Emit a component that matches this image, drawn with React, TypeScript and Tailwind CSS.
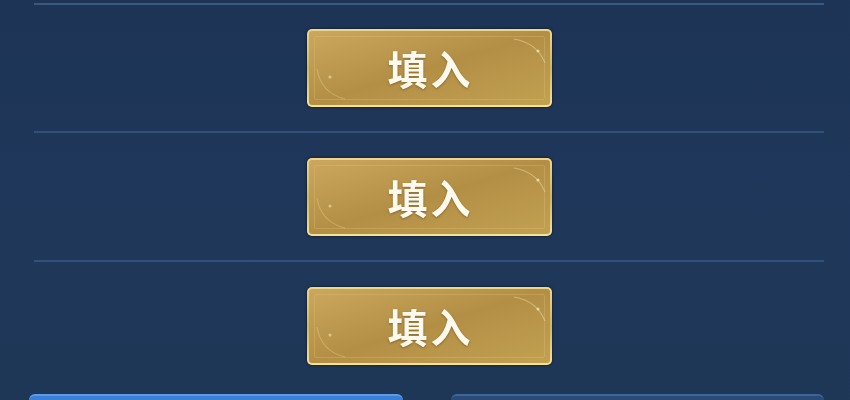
import React from "react";

function GoldButton() {
  return (
    <div className="relative w-[245px] h-[78px] rounded-[5px] p-[2px] bg-gradient-to-b from-[#efd68a] via-[#d7b560] to-[#f6e394] shadow-[0_0_3px_rgba(0,0,0,0.6)]">
      <div className="relative w-full h-full rounded-[3px] bg-gradient-to-br from-[#cba85e] via-[#b38f45] to-[#c2a152] flex items-center justify-center overflow-hidden">
        <div className="absolute inset-[5px] rounded-[2px] border border-[#e2c77c]/30" />
        <svg className="absolute inset-0" width="241" height="74" viewBox="0 0 241 74">
          <path d="M205 8 Q228 12 236 32" stroke="#f4e2a6" strokeOpacity="0.45" strokeWidth="1.2" fill="none" />
          <circle cx="229" cy="20" r="1.6" fill="#f8ebbb" opacity="0.7" />
          <path d="M8 38 Q12 62 36 68" stroke="#f4e2a6" strokeOpacity="0.3" strokeWidth="1.2" fill="none" />
          <circle cx="21" cy="46" r="1.6" fill="#f8ebbb" opacity="0.55" />
        </svg>
        <span
          className="relative text-[#fffaf0] text-[40px] leading-none font-semibold tracking-[3px] pl-[3px] drop-shadow-[0_1px_1px_rgba(90,60,10,0.5)]"
          style={{ fontFamily: '"Noto Sans CJK SC", "Noto Sans", sans-serif' }}
        >
          填入
        </span>
      </div>
    </div>
  );
}

export default function App() {
  return (
    <div className="w-[850px] h-[400px] overflow-hidden bg-gradient-to-b from-[#1d3456] via-[#1f375a] to-[#1e3757] relative">
      <div className="flex flex-col pt-[3px] pl-[34px] pr-[26px]">
        <div className="h-[2px] bg-[#3a5780]" />
        <div className="h-[126px] flex items-center justify-center">
          <GoldButton />
        </div>
        <div className="h-[2px] bg-[#31507a]" />
        <div className="h-[127px] flex items-center justify-center">
          <GoldButton />
        </div>
        <div className="h-[2px] bg-[#31507a]" />
        <div className="h-[127px] flex items-center justify-center">
          <GoldButton />
        </div>
      </div>
      <div className="absolute left-[29px] right-[26px] top-[394px] flex gap-[48px]">
        <div className="flex-1 h-[30px] rounded-t-[6px] border-t-2 border-[#5f9ae6] bg-[#3b7fd8]" />
        <div className="flex-1 h-[30px] rounded-t-[6px] border-t-2 border-[#3d659b] bg-[#2a4a78]" />
      </div>
    </div>
  );
}
